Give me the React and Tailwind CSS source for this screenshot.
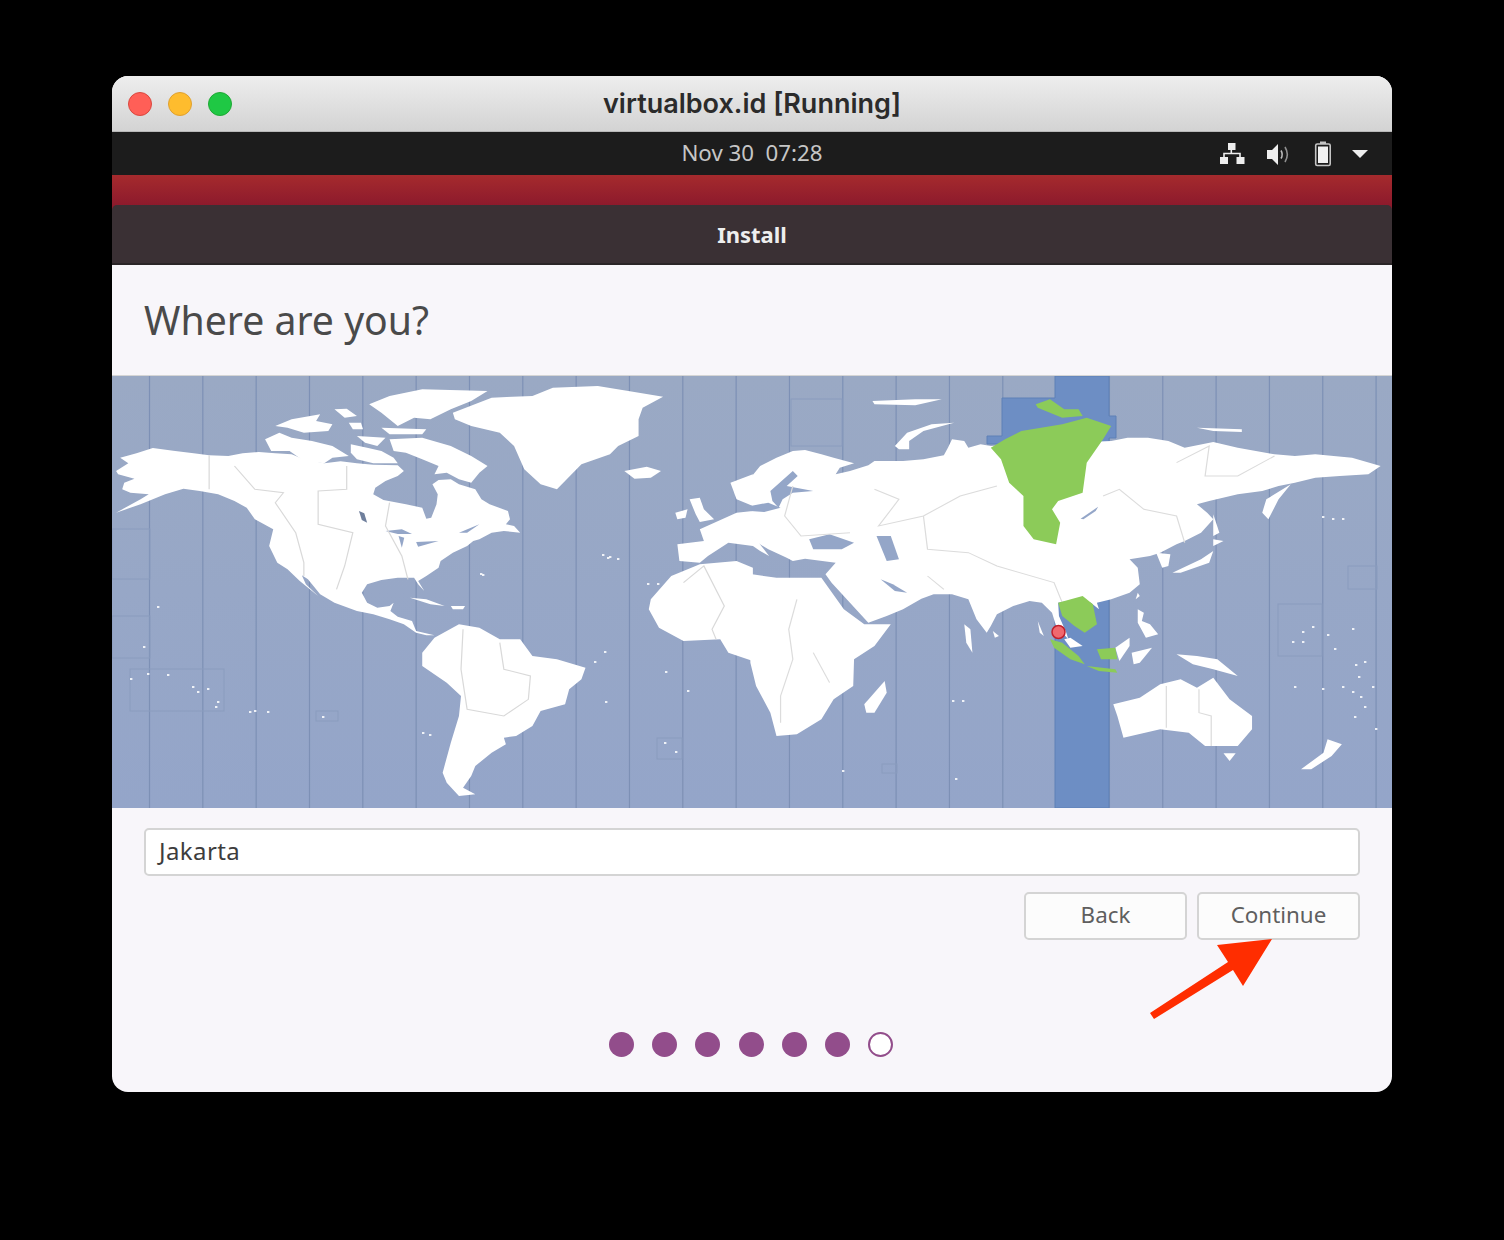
const font = { fontFamily: '"Noto Sans", "Open Sans", sans-serif' }

const westLand = [
  '10,285 40,262 20,245 60,232 100,216 150,224 200,232 238,238 285,240 320,232 360,228 400,232 440,235 470,250 520,262 560,256 600,262 640,266 700,268 715,285 700,300 670,315 645,335 640,355 665,372 720,385 760,395 770,428 782,425 795,385 798,355 785,325 800,312 830,310 850,325 890,340 905,370 925,385 970,405 975,430 965,445 985,450 1000,470 960,465 930,470 900,490 885,495 870,510 835,530 805,555 800,575 770,600 750,615 765,645 750,625 740,605 700,605 660,612 625,625 612,650 625,680 650,695 680,690 690,680 682,705 700,722 735,735 745,765 790,778 770,778 745,770 715,745 680,730 640,715 600,705 545,680 510,655 480,610 465,598 475,625 505,660 460,615 430,580 405,560 385,510 395,460 350,430 330,395 300,375 260,355 215,345 175,338 130,355 70,385 10,410 70,370 90,355 45,350 25,340 30,320 55,308 15,295',
  '375,190 410,170 440,185 490,195 540,210 580,240 540,245 520,262 470,255 435,225 390,225',
  '400,150 440,130 510,115 500,135 540,145 530,165 470,170 430,155',
  '545,100 575,98 600,120 570,125',
  '630,85 680,60 760,40 920,45 880,75 830,100 780,130 740,125 700,150 660,110',
  '660,155 770,160 760,175 680,175',
  '580,140 610,140 615,160 590,160',
  '600,180 670,185 650,210 620,200',
  '585,205 625,215 660,225 690,245 700,262 640,262 600,250 585,230',
  '680,190 760,185 830,210 880,240 920,270 900,290 880,320 850,310 820,290 790,295 800,270 760,250 720,230 690,225',
  '835,110 930,65 1030,60 1080,35 1190,30 1265,45 1350,62 1300,95 1290,130 1290,180 1240,210 1220,235 1150,265 1090,340 1050,325 1010,280 985,210 950,170 880,150 840,130',
  '1255,285 1310,272 1345,285 1320,305 1280,308',
  '730,665 770,670 815,690 780,685',
  '830,690 865,690 860,700 835,700',
  '790,785 850,745 900,755 950,790 1000,790 1030,840 1090,850 1160,875 1150,910 1120,940 1110,985 1050,1005 1030,1050 990,1080 960,1085 965,1105 930,1130 890,1170 880,1200 860,1235 890,1255 850,1260 820,1220 810,1190 830,1100 850,1020 855,960 820,920 760,870 760,830',
  '1320,670 1370,600 1440,565 1530,555 1570,575 1570,855 1510,830 1490,790 1400,795 1340,755 1315,700',
  '1440,460 1530,410 1570,405 1570,510 1510,500 1460,540 1440,560 1390,555 1385,505 1450,495',
  '1415,370 1440,365 1450,400 1475,430 1440,438 1430,415',
  '1380,410 1410,400 1405,425 1385,430',
  '1515,320 1570,295 1570,390 1530,370',
]

const eastLand = [
  '0,300 20,270 60,245 100,225 130,222 170,235 200,245 250,262 215,275 205,295 240,285 285,268 300,255 370,255 420,250 470,238 480,215 490,190 520,195 530,215 560,205 585,210 880,195 920,185 970,185 1020,195 1060,215 1130,198 1190,215 1280,235 1330,240 1380,235 1470,245 1540,270 1510,295 1440,300 1380,305 1330,320 1290,330 1250,345 1190,355 1120,375 1090,385 1115,410 1130,430 1115,450 1100,470 1060,495 1040,505 1000,530 975,540 925,550 945,575 950,625 925,650 880,670 845,680 850,700 830,680 800,668 750,680 752,720 770,770 775,790 745,750 735,710 710,680 680,675 640,690 600,715 585,750 575,770 550,730 530,670 490,655 445,655 415,668 370,700 330,720 285,740 240,680 195,620 180,595 205,560 130,548 100,555 85,545 40,520 0,490',
  '0,595 60,605 170,605 190,640 225,700 275,745 340,745 300,810 250,850 248,930 200,970 170,1030 110,1075 60,1080 45,1010 10,930 -4,860 -4,595',
  '1250,410 1260,370 1320,325 1290,370 1265,430',
  '1130,415 1145,470 1130,480',
  '1130,490 1155,495 1130,510',
  '1030,590 1100,550 1130,525 1120,560 1050,590',
  '990,530 1025,535 1020,570 1005,575',
  '945,650 950,660 940,670',
  '945,700 960,710 955,735 975,745 995,775 965,785 945,740',
  '350,210 380,170 440,145 495,140 420,165 385,195 385,220 360,220',
  '295,75 400,70 465,70 400,88 300,85',
  '1090,155 1200,160 1200,168 1130,165',
  '1040,835 1090,840 1140,850 1190,900 1130,880 1080,865',
  '930,830 980,815 950,860 935,865',
  '885,985 950,965 1000,925 1050,910 1090,935 1130,905 1170,970 1225,1020 1225,1060 1190,1110 1110,1110 1070,1070 1000,1060 910,1085 895,1020',
  '1155,1132 1185,1132 1170,1155',
  '1345,1180 1400,1130 1410,1090 1445,1105 1420,1140 1370,1180',
  '275,985 325,915 330,950 300,1010 280,1010',
  '590,765 605,780 595,785',
  '765,790 780,785 810,810 780,815',
  '890,815 925,785 925,810 900,855',
  '520,745 535,760 540,830 525,800',
  '700,735 715,780 705,770',
  '-4,490 10,490 42,540 20,525 -4,505',
]

const eastWater = [
  '140,490 190,475 250,500 220,520 150,520',
  '305,480 340,480 360,550 330,555',
  '45,345 100,285 112,300 85,330 150,345 100,350 75,370 65,395 50,375',
  '-4,390 40,380 70,395 30,408 -4,405',
  '315,610 350,645 380,650 345,625',
  '805,428 848,392 842,405 812,430',
]

const eastGreen = [
  '695,85 730,70 765,100 800,100 810,120 760,125 700,95',
  '585,215 620,190 660,165 760,145 820,125 880,150 860,190 820,260 810,350 750,375 735,400 755,440 745,505 690,490 665,450 665,360 630,320 610,250',
  '750,680 810,660 835,685 845,745 815,770 790,750 760,720',
  '730,790 760,800 800,840 815,865 780,850 740,815',
  '820,870 890,880 895,890 850,885',
  '845,820 890,815 895,850 855,850',
]

const westBorders = [
  '238,238 238,340',
  '300,270 350,340 420,350 400,380 450,470 470,560 470,600',
  '575,270 575,340 505,345 505,445 590,470 570,570 550,640',
  '680,380 670,450 710,540 725,610',
  '860,760 855,880 870,1000 960,1020 1020,970 1025,900 960,880 950,800',
  '1400,620 1450,570 1500,690 1470,760 1480,790',
]

const eastBorders = [
  '100,330 80,420 120,480 240,470',
  '110,670 90,760 100,850 70,960 70,1040',
  '1015,930 1015,1055',
  '1095,940 1095,1010 1125,1020 1125,1110',
  '300,340 360,370 310,450 420,420 510,360 600,330',
  '420,420 430,520 530,530 600,570 740,620 760,680',
  '860,360 900,340 960,400 1040,420 1060,500',
  '1040,260 1120,210 1110,300 1190,300 1280,240',
  '430,600 470,640',
  '150,830 190,920',
]

const zoneBoxes = [
  [0, 153, 38, 50], [0, 240, 38, 42], [18, 293, 94, 42], [204, 335, 22, 10], [545, 362, 25, 21],
  [770, 388, 15, 9], [1236, 190, 29, 23], [1166, 228, 44, 52], [679, 23, 51, 47],
]

const dots = [
  [45, 230], [31, 270], [35, 297], [18, 302], [55, 298], [80, 310], [85, 315], [105, 325], [103, 330], [95, 312],
  [137, 335], [142, 334], [155, 335], [210, 340], [310, 356], [317, 358], [370, 198], [490, 178], [495, 181], [505, 182],
  [368, 197], [580, 210], [497, 180], [535, 207], [545, 207], [492, 275], [482, 285], [553, 295], [575, 314],
  [493, 325], [552, 366], [563, 375], [622, 275], [840, 324], [850, 324], [730, 394], [843, 402], [1182, 310], [1210, 312],
  [1230, 310], [1246, 300], [1190, 265], [1200, 250], [1215, 258], [1243, 288], [1252, 285], [1180, 265], [1190, 255], [1222, 272],
  [1240, 315], [1248, 320], [1260, 310], [1252, 330], [1242, 340], [1263, 352], [1240, 252], [1210, 140], [1220, 142], [1230, 142],
]

function WorldMap() {
  return (
    <svg viewBox="0 0 1280 432" className="block h-[432px] w-[1280px] blur-[0.5px]">
      <defs>
        <linearGradient id="sea" x1="0" y1="0" x2="0" y2="1">
          <stop offset="0" stopColor="#9aa9c4" />
          <stop offset="1" stopColor="#94a5c9" />
        </linearGradient>
      </defs>
      <rect width="1280" height="432" fill="url(#sea)" />
      {Array.from({ length: 24 }, (_, i) => (
        <line key={i} x1={37.5 + i * 53.33} y1="0" x2={37.5 + i * 53.33} y2="432" stroke="#7d90b5" strokeWidth="1.2" />
      ))}
      <g fill="none" stroke="#8a9cbe" strokeWidth="1">
        {zoneBoxes.map(([x, y, w, h], i) => <rect key={i} x={x} y={y} width={w} height={h} />)}
      </g>
      <path d="M943 0H997V40H1004V62H997V432H943V68H875V60H890V22H943Z" fill="#6d8ec4" stroke="#5f80b6" strokeWidth="1" />
      <g fill="#ffffff">
        {dots.map(([x, y], i) => <rect key={i} x={x} y={y} width="2.4" height="2" opacity="0.85" />)}
      </g>
      <g transform="scale(0.4082 0.3333)">
        <g fill="#ffffff">{westLand.map((p, i) => <polygon key={i} points={p} />)}</g>
        <g fill="#94a6c8">
          <polygon points="605,405 618,412 625,440 612,432" fill="#6f7f9c" />
          <polygon points="670,465 710,460 735,474 700,474" />
          <polygon points="702,480 716,485 710,515" />
          <polygon points="745,498 800,495 750,512" />
          <polygon points="850,470 900,445 870,470" />
        </g>
        <g fill="none" stroke="#d9d9d9" strokeWidth="3">
          {westBorders.map((p, i) => <polyline key={i} points={p} />)}
        </g>
      </g>
      <g transform="translate(640 0) scale(0.4082 0.3333)">
        <g fill="#ffffff">{eastLand.map((p, i) => <polygon key={i} points={p} />)}</g>
        <g fill="#94a6c8">{eastWater.map((p, i) => <polygon key={i} points={p} />)}</g>
        <g fill="none" stroke="#dcdcdc" strokeWidth="3">
          {eastBorders.map((p, i) => <polyline key={i} points={p} />)}
        </g>
        <g fill="#8ccb59">{eastGreen.map((p, i) => <polygon key={i} points={p} />)}</g>
      </g>
      <circle cx="946.5" cy="256" r="6.5" fill="#f0686e" stroke="#c0202c" strokeWidth="1.5" />
    </svg>
  )
}

function StatusIcons() {
  return (
    <div className="flex items-center justify-end pr-[24px]">
      <svg width="26" height="24" viewBox="0 0 26 24" fill="#eeeeee" className="mr-[21px]">
        <rect x="9" y="1" width="7.5" height="7" />
        <rect x="1" y="15" width="8" height="7" />
        <rect x="17.5" y="15" width="8" height="7" />
        <path d="M12.3 8v3.5M5 15v-3.5h16V15" fill="none" stroke="#eeeeee" strokeWidth="1.6" />
      </svg>
      <svg width="24" height="24" viewBox="0 0 24 24" fill="none" className="mr-[24px]">
        <path d="M1 8h5l6-6v21l-6-6H1z" fill="#eeeeee" />
        <path d="M15 8.5c1.5 2.5 1.5 5.5 0 8" stroke="#bdbdbd" strokeWidth="1.6" />
        <path d="M19 5c2.8 4.5 2.8 10.500 0 15" stroke="#8f8f8f" strokeWidth="1.6" />
      </svg>
      <svg width="18" height="26" viewBox="0 0 18 26" fill="none" className="mr-[20px]">
        <rect x="1.700" y="3" width="14.500" height="21.500" rx="1.500" stroke="#c4c4c4" strokeWidth="1.600" />
        <rect x="6" y="0.500" width="6" height="2.500" fill="#c4c4c4" />
        <rect x="4" y="5.500" width="10" height="16.500" fill="#f1f1f1" />
      </svg>
      <svg width="16" height="8" viewBox="0 0 16 8" fill="#eeeeee"><path d="M0 0h16L8 8z" /></svg>
    </div>
  )
}

export default function App() {
  const steps = [1, 1, 1, 1, 1, 1, 0]
  return (
    <div className="h-[1240px] w-[1504px] overflow-hidden bg-black pl-[112px] pt-[76px]" style={font}>
      <div className="relative h-[1016px] w-[1280px] overflow-hidden rounded-[16px] bg-[#f8f6fa]">
        <div className="relative flex h-[56px] items-center justify-center border-b border-[#b8b8b8] bg-gradient-to-b from-[#eeeeee] to-[#d3d3d3]">
          <div className="absolute left-[16px] top-[16px] flex gap-[16px]">
            <span className="h-[24px] w-[24px] rounded-full border border-[#d9483f] bg-[#ff5f57]" />
            <span className="h-[24px] w-[24px] rounded-full border border-[#dfa030] bg-[#febc2e]" />
            <span className="h-[24px] w-[24px] rounded-full border border-[#1fa834] bg-[#1fc844]" />
          </div>
          <span className="text-[27px] font-semibold leading-none text-[#2b2b2b]" style={{ fontFamily: 'Inter, sans-serif' }}>virtualbox.id [Running]</span>
        </div>
        <div className="grid h-[43px] grid-cols-[1fr_auto_1fr] items-center bg-[#1c1c1c]">
          <div />
          <span className="text-[22.300px] leading-none whitespace-pre text-[#c6c6c6]">Nov 30  07:28</span>
          <StatusIcons />
        </div>
        <div className="h-[30px] bg-gradient-to-b from-[#a52a2d] to-[#8d1a2c]" />
        <div className="bg-[#8d1a2c]">
          <div className="flex h-[60px] items-center justify-center rounded-t-[5px] border-b-2 border-[#2a2527] bg-[#3a3034]">
            <span className="text-[22px] font-bold leading-none text-[#eeeeee]">Install</span>
          </div>
        </div>
        <div className="flex h-[111px] items-center border-b border-[#d5d5d5] px-[32px]">
          <h1 className="text-[39.200px] leading-none text-[#4a4a4a]">Where are you?</h1>
        </div>
        <WorldMap />
        <div className="px-[32px] pt-[20px]">
          <div className="flex h-[48px] items-center rounded-[5px] border-2 border-[#d4d4d4] bg-white px-[13px] pb-[2px] text-[24px] tracking-[0.4px] text-[#3d3d3d]">Jakarta</div>
          <div className="mt-[16px] flex justify-end gap-[10px]">
            <button className="h-[48px] w-[163px] rounded-[5px] border-2 border-[#d4d4d4] bg-[#fcfcfc] pb-[2px] text-[22.400px] text-[#5f5f5f]">Back</button>
            <button className="h-[48px] w-[163px] rounded-[5px] border-2 border-[#d4d4d4] bg-[#fcfcfc] pb-[2px] text-[22.400px] text-[#5f5f5f]">Continue</button>
          </div>
          <div className="mt-[92px] flex justify-center gap-[18.200px] pr-[2px]">
            {steps.map((on, i) => (
              <span key={i} className={on ? 'h-[25px] w-[25px] rounded-full bg-[#924d8b]' : 'h-[25px] w-[25px] rounded-full border-2 border-[#924d8b] bg-white'} />
            ))}
          </div>
        </div>
        <svg className="absolute left-[1030px] top-[855px]" width="140" height="100" viewBox="1142 931 140 100">
          <polygon points="1150,1013 1228,962 1217,945 1272,939 1243,986 1233,970 1154,1019" fill="#ff2d00" />
        </svg>
      </div>
    </div>
  )
}
